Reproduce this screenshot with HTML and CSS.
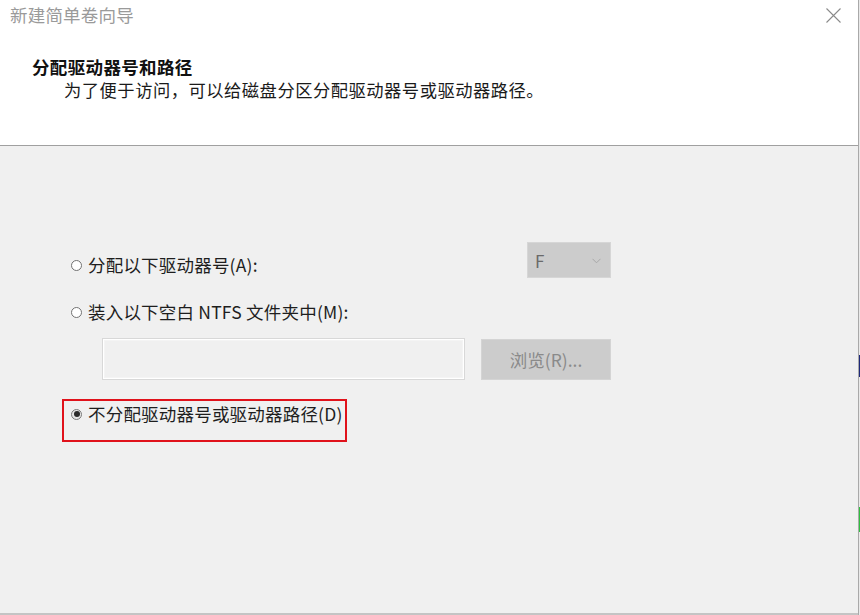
FILE: index.html
```html
<!DOCTYPE html>
<html lang="zh-CN">
<head>
<meta charset="utf-8">
<title>新建简单卷向导</title>
<link rel="stylesheet" href="styles.css">
</head>
<body>
<div class="screen">
  <div class="window">
    <div class="header">
      <div class="titlebar">
        <span class="title">新建简单卷向导</span>
        <svg class="close" width="15" height="15" viewBox="0 0 15 15"><path d="M0.5 0.5 L14.5 14.5 M14.5 0.5 L0.5 14.5" stroke="#8a8a8a" stroke-width="1.1" fill="none"/></svg>
      </div>
      <div class="heading">
        <div class="h-title">分配驱动器号和路径</div>
        <div class="h-sub">为了便于访问，可以给磁盘分区分配驱动器号或驱动器路径。</div>
      </div>
    </div>
    <div class="content">
      <div class="row row-letter">
        <label class="opt"><span class="radio"></span>分配以下驱动器号(A):</label>
        <div class="combo"><span>F</span><svg width="9" height="6" viewBox="0 0 9 6"><path d="M0.5 0.8 L4.5 4.8 L8.5 0.8" stroke="#a8a8a8" stroke-width="1" fill="none"/></svg></div>
      </div>
      <div class="row row-mount">
        <label class="opt"><span class="radio"></span>装入以下空白 NTFS 文件夹中(M):</label>
      </div>
      <div class="row row-path">
        <div class="textbox"></div>
        <div class="btn">浏览(R)...</div>
      </div>
      <div class="highlight">
        <label class="opt"><span class="radio checked"></span>不分配驱动器号或驱动器路径(D)</label>
      </div>
    </div>
  </div>
  <div class="edge">
    <div class="edge-blue"></div>
    <div class="edge-green"></div>
  </div>
</div>
</body>
</html>
```
FILE: styles.css
```css
html, body {
  margin: 0;
  padding: 0;
  background: #f0f0f0;
}
body {
  font-family: "Noto Sans CJK SC", "Noto Sans", sans-serif;
  color: #1a1a1a;
}
.screen {
  width: 860px;
  height: 615px;
  display: flex;
  overflow: hidden;
}
.window {
  width: 858px;
  height: 615px;
  display: flex;
  flex-direction: column;
  border-right: 1px solid #a9a9a9;
  background: #f0f0f0;
}
.header {
  background: #ffffff;
  border-bottom: 1px solid #a0a0a0;
  box-sizing: border-box;
  height: 146px;
}
.titlebar {
  display: flex;
  justify-content: space-between;
  align-items: flex-start;
  padding: 3px 17px 0 10px;
  height: 27px;
}
.title {
  font-size: 17.5px;
  line-height: 24px;
  color: #9a9a9a;
  letter-spacing: 0.2px;
}
.close {
  margin-top: 5px;
}
.heading {
  padding: 25px 0 0 32px;
}
.h-title {
  font-size: 17.5px;
  font-weight: bold;
  line-height: 23px;
  color: #111;
  letter-spacing: 0.35px;
}
.h-sub {
  font-size: 17.3px;
  line-height: 23px;
  padding-left: 32px;
  color: #1a1a1a;
  letter-spacing: 0.5px;
}
.content {
  flex: 1;
  padding: 96px 0 0 0;
  border-bottom: 2px solid #c4c4c4;
}
.row {
  display: flex;
}
.opt {
  display: flex;
  align-items: center;
  font-size: 17.5px;
  line-height: 24px;
  color: #1e1e1e;
  letter-spacing: 0.2px;
}
.radio {
  width: 11px;
  height: 11px;
  box-sizing: border-box;
  border: 1px solid #727272;
  border-radius: 50%;
  margin: 0 6px 0 0;
  background: #fff;
  display: flex;
  align-items: center;
  justify-content: center;
}
.radio.checked {
  border-color: #7a7a7a;
  background: #e6e6e6;
}
.radio.checked::after {
  content: "";
  width: 6px;
  height: 6px;
  border-radius: 50%;
  background: #2a2a2a;
}
.row-letter {
  height: 36px;
  padding-left: 71px;
}
.row-letter .opt {
  align-self: flex-start;
  margin-top: 11px;
}
.combo {
  margin-left: auto;
  margin-right: 247px;
  width: 84px;
  height: 36px;
  box-sizing: border-box;
  background: #cccccc;
  border: 1px solid #d6d6d6;
  display: flex;
  align-items: center;
  justify-content: space-between;
  padding: 0 9px 0 7px;
  font-size: 17px;
  color: #6a6a6a;
}
.combo svg {
  margin-top: 2px;
}
.row-mount {
  margin-top: 22px;
  padding-left: 71px;
}
.row-path {
  margin-top: 14px;
  padding-left: 102px;
  gap: 16px;
  height: 42px;
  align-items: flex-start;
}
.textbox {
  width: 363px;
  height: 42px;
  box-sizing: border-box;
  border: 1px solid #d8d8d8;
  box-shadow: inset 0 0 0 1px #ffffff, inset 0 0 0 2px #f4f4f4;
  background: #f0f0f0;
}
.btn {
  width: 130px;
  height: 41px;
  margin-top: 1px;
  box-sizing: border-box;
  background: #cccccc;
  border: 1px solid #d4d4d4;
  display: flex;
  align-items: center;
  justify-content: center;
  font-size: 17.5px;
  color: #8a8a8a;
}
.highlight {
  margin: 19px 0 0 62px;
  width: 285px;
  height: 43px;
  box-sizing: border-box;
  border: 2px solid #e0121b;
  padding: 1px 0 0 7px;
}
.highlight .opt {
  height: 24px;
}
.edge {
  width: 1px;
  height: 615px;
  background: #e9e9e9;
  display: flex;
  flex-direction: column;
}
.edge-blue {
  margin-top: 355px;
  height: 22px;
  background: #1e2a7a;
}
.edge-green {
  margin-top: 130px;
  height: 25px;
  background: #2fbf3f;
}
```
